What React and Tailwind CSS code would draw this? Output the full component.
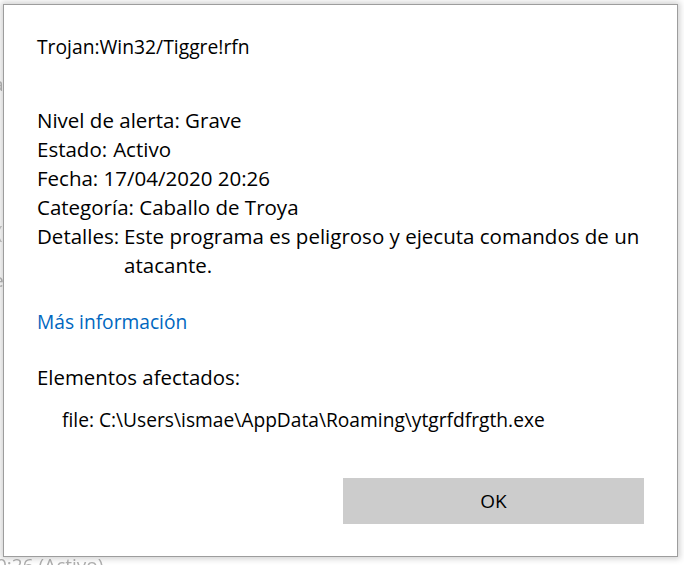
export default function App() {
  const font = { fontFamily: '"Open Sans", "Noto Sans", sans-serif' };
  return (
    <div className="relative w-[684px] h-[565px] overflow-hidden bg-white text-black" style={font}>
      {/* faint background content behind the dialog */}
      <div className="absolute left-[-7px] top-[70px] text-[19px] leading-[29px] text-[#b8b8b8] blur-[0.6px]">a</div>
      <div className="absolute left-[-3px] top-[218px] text-[19px] leading-[29px] text-[#c4c4c4] blur-[0.6px]">(</div>
      <div className="absolute left-[-7px] top-[266px] text-[19px] leading-[29px] text-[#b8b8b8] blur-[0.6px]">e</div>
      <div className="absolute left-[-4px] top-[551px] text-[19px] leading-[29px] text-[#b0b0b0] blur-[0.4px]">
        0:26 (Activo)
      </div>

      {/* dialog */}
      <div className="absolute left-[3px] top-[4px] w-[675px] h-[553px] bg-white border border-[#9d9d9d] shadow-[0_0_6px_2px_rgba(0,0,0,0.18)] flex flex-col">
        <div className="pl-[33px] pr-[33px] pt-[32px] flex flex-col flex-1">
          <div className="text-[19.3px] leading-[20px]">Trojan:Win32/Tiggre!rfn</div>

          <div className="mt-[49px] text-[20.5px] leading-[29px]">
            <div>Nivel de alerta: Grave</div>
            <div className="flex gap-[6px]"><span>Estado:</span><span>Activo</span></div>
            <div>Fecha: 17/04/2020 20:26</div>
            <div>Categoría: Caballo de Troya</div>
            <div className="flex gap-[5px]">
              <span className="shrink-0">Detalles:</span>
              <span>Este programa es peligroso y ejecuta comandos de un atacante.</span>
            </div>
          </div>

          <div className="mt-[27px] text-[19.2px] leading-[29px] text-[#0067c0]">Más información</div>

          <div className="mt-[27px] text-[20.4px] leading-[29px]">Elementos afectados:</div>
          <div className="mt-[16px] pl-[25px] text-[19.2px] leading-[24px]">
            file: C:\Users\ismae\AppData\Roaming\ytgrfdfrgth.exe
          </div>

          <div className="mt-auto mb-[32px] flex justify-end">
            <button className="w-[301px] h-[46px] bg-[#cccccc] text-[19px] text-black">OK</button>
          </div>
        </div>
      </div>
    </div>
  );
}
